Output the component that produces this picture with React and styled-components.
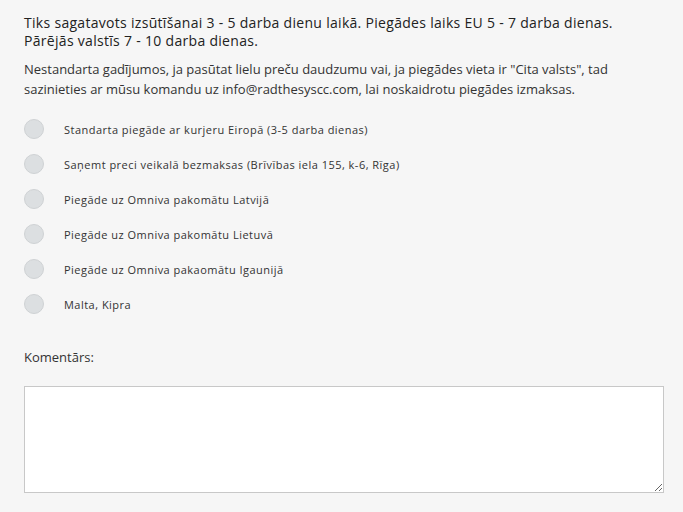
import React from "react";
import styled, { createGlobalStyle } from "styled-components";

const Global = createGlobalStyle`
  html, body { margin: 0; padding: 0; background: #f6f6f6; }
  body { font-family: "Open Sans", "Liberation Sans", sans-serif; color: #333; }
`;

const Page = styled.div`
  width: 640px;
  padding: 14px 19px 20px 24px;
  background: #f6f6f6;
`;

const Heading = styled.p`
  margin: 0;
  font-size: 14px;
  line-height: 18px;
  letter-spacing: 0.3px;
  color: #222;
`;

const Note = styled.p`
  margin: 9px 0 0;
  font-size: 13px;
  line-height: 20px;
  color: #333;
`;

const Options = styled.div`
  display: flex;
  flex-direction: column;
  gap: 15px;
  margin-top: 20px;
`;

const Option = styled.label`
  display: flex;
  align-items: center;
  gap: 20px;
  height: 20px;
  font-size: 11px;
  letter-spacing: 0.48px;
  color: #333;
  cursor: pointer;
`;

const Radio = styled.span`
  width: 18px;
  height: 18px;
  border-radius: 50%;
  background: #dcdfe1;
  border: 1px solid #cfd2d4;
  flex: none;
`;

const Label = styled.div`
  margin-top: 34px;
  font-size: 13px;
  line-height: 18px;
  color: #333;
`;

const Area = styled.textarea`
  display: block;
  box-sizing: border-box;
  width: 640px;
  height: 107px;
  margin-top: 20px;
  background: #fff;
  border: 1px solid #c8c8c8;
  font-family: inherit;
`;

const items = [
  "Standarta piegāde ar kurjeru Eiropā (3-5 darba dienas)",
  "Saņemt preci veikalā bezmaksas (Brīvības iela 155, k-6, Rīga)",
  "Piegāde uz Omniva pakomātu Latvijā",
  "Piegāde uz Omniva pakomātu Lietuvā",
  "Piegāde uz Omniva pakaomātu Igaunijā",
  "Malta, Kipra",
];

export default function App() {
  return (
    <>
      <Global />
      <Page>
        <Heading>
          Tiks sagatavots izsūtīšanai 3 - 5 darba dienu laikā. Piegādes laiks EU 5 - 7 darba dienas. Pārējās valstīs 7 - 10 darba dienas.
        </Heading>
        <Note>
          Nestandarta gadījumos, ja pasūtat lielu preču daudzumu vai, ja piegādes vieta ir "Cita valsts", tad sazinieties ar mūsu komandu uz info@radthesyscc.com, lai noskaidrotu piegādes izmaksas.
        </Note>
        <Options>
          {items.map((t) => (
            <Option key={t}>
              <Radio />
              <span>{t}</span>
            </Option>
          ))}
        </Options>
        <Label>Komentārs:</Label>
        <Area />
      </Page>
    </>
  );
}
